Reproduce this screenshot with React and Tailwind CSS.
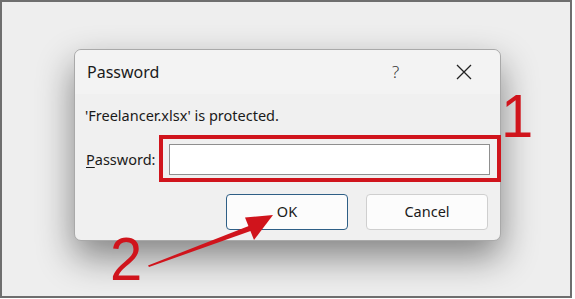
export default function App() {
  return (
    <div className="w-[575px] h-[299px] bg-white" style={{ fontFamily: '"Noto Sans", "Open Sans", sans-serif' }}>
      <div className="relative w-[572px] h-[298px] border-2 border-[#6e6e6e] bg-[#eeeeee] overflow-hidden pl-[72px] pt-[47px]">
        {/* dialog */}
        <div className="relative w-[427px] h-[192px] rounded-[7px] border border-[#a9a9a9] bg-[#f0f0f0] shadow-[0_16px_36px_rgba(0,0,0,0.45)] flex flex-col text-[#1a1a1a]">
          <div className="h-[44px] flex items-center pl-[12px] rounded-t-[7px] bg-[#f3f3f3]">
            <span className="text-[16px] flex-1">Password</span>
            <span className="text-[17px] text-[#333] w-[10px] mr-[54px] font-light">?</span>
            <svg width="16" height="16" viewBox="0 0 16 16" className="mr-[28px]">
              <path d="M1 1 L15 15 M15 1 L1 15" stroke="#222" strokeWidth="1.3" />
            </svg>
          </div>
          <div className="mt-[12px] h-[20px] flex items-center px-[10px] text-[14.5px]">
            'Freelancer.xlsx' is protected.
          </div>
          <div className="mt-[18px] h-[31px] flex items-center pl-[11px] pr-[10px] gap-[14px]">
            <label className="text-[14.5px]"><span className="underline underline-offset-2">P</span>assword:</label>
            <input type="password" className="flex-1 h-[31px] bg-white border border-[#8f8f8f] outline-none" />
          </div>
          <div className="mt-[19px] h-[36px] flex justify-end gap-[18px] pr-[12px]">
            <button className="w-[122px] h-[36px] rounded-[4px] border border-[#2e5f86] bg-[#fcfcfc] text-[14.5px]">OK</button>
            <button className="w-[122px] h-[36px] rounded-[4px] border border-[#cfcfcf] bg-[#fcfcfc] text-[14.5px]">Cancel</button>
          </div>
          {/* annotation box 1 */}
          <div className="absolute left-[84px] top-[85px] w-[342px] h-[47px] border-[4px] border-[#d0141c]" />
        </div>

        {/* annotation numbers */}
        <span className="absolute left-[499px] top-[85px] text-[58px] leading-none text-[#d0141c] scale-y-[1.05]" style={{ fontFamily: '"Liberation Sans", Arial, sans-serif' }}>1</span>
        <span className="absolute left-[108px] top-[228px] text-[58px] leading-none text-[#d0141c] scale-y-[1.05]" style={{ fontFamily: '"Liberation Sans", Arial, sans-serif' }}>2</span>

        {/* arrow */}
        <svg className="absolute left-0 top-0" width="572" height="298" viewBox="-2 -2 572 298">
          <polygon points="144,261.5 246,221.5 248,226.5 145,263" fill="#d0141c" />
          <polygon points="269,211 241,213.5 250,236" fill="#d0141c" />
        </svg>
      </div>
    </div>
  );
}
